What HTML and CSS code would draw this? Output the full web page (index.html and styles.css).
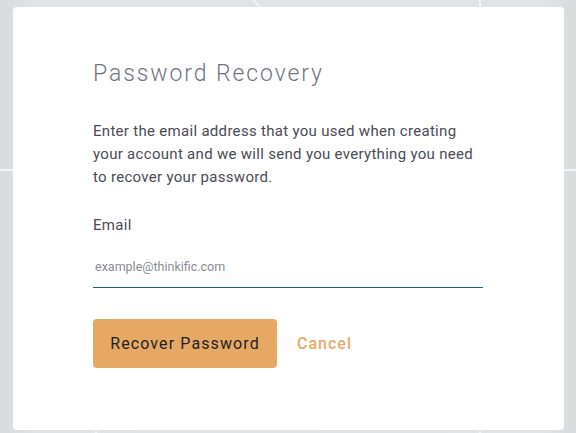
FILE: index.html
```html
<!DOCTYPE html>
<html>
<head>
<meta charset="utf-8">
<link rel="stylesheet" href="styles.css">
</head>
<body>
<svg class="backdrop" width="576" height="433" viewBox="0 0 576 433" aria-hidden="true">
  <g stroke="#f2f3f4" stroke-width="2" fill="none">
    <line x1="0" y1="170" x2="576" y2="170"/>
    <line x1="480" y1="0" x2="480" y2="433"/>
    <line x1="96" y1="300" x2="96" y2="433"/>
    <line x1="251" y1="-2" x2="262" y2="9"/>
  </g>
</svg>
<main class="card">
  <h1 class="title">Password Recovery</h1>
  <p class="intro">Enter the email address that you used when creating your account and we will send you everything you need to recover your password.</p>
  <form class="form">
    <label class="label" for="email">Email</label>
    <input class="input" id="email" type="email" placeholder="example@thinkific.com">
    <div class="actions">
      <button type="button" class="btn-primary">Recover Password</button>
      <a class="cancel" href="#">Cancel</a>
    </div>
  </form>
</main>
</body>
</html>
```
FILE: styles.css
```css
html, body {
  margin: 0;
  padding: 0;
}
body {
  width: 576px;
  height: 433px;
  overflow: hidden;
  position: relative;
  background: linear-gradient(90deg, #d9dadc 0%, #e1e2e4 6%, #e2e3e5 94%, #d9dadc 100%);
  font-family: Roboto, "Liberation Sans", sans-serif;
}
.backdrop {
  position: absolute;
  left: 0;
  top: 0;
}
.card {
  position: relative;
  box-sizing: border-box;
  margin: 7px 12px 0 13px;
  height: 423px;
  background: #fff;
  border-radius: 4px;
  padding: 51px 80px 0 80px;
}
.title {
  margin: 0;
  font-weight: 300;
  font-size: 23px;
  line-height: 32px;
  color: #72757f;
  letter-spacing: 1.9px;
}
.intro {
  margin: 30px 0 0;
  font-size: 15px;
  line-height: 23px;
  letter-spacing: 0.3px;
  color: #4a4b55;
  width: 390px;
}
.form {
  display: flex;
  flex-direction: column;
  margin-top: 25px;
}
.label {
  font-size: 15px;
  line-height: 22px;
  letter-spacing: 0.3px;
  color: #4a4b55;
}
.input {
  margin-top: 22px;
  width: 390px;
  box-sizing: border-box;
  border: none;
  border-bottom: 1px solid #1b5f87;
  padding: 0 0 11px 2px;
  font-family: Roboto, "Liberation Sans", sans-serif;
  font-size: 12.5px;
  line-height: 18px;
  color: #333;
  outline: none;
  background: transparent;
}
.input::placeholder {
  color: #8a8c93;
}
.actions {
  display: flex;
  align-items: center;
  gap: 20px;
  margin-top: 31px;
}
.btn-primary {
  width: 184px;
  height: 49px;
  border: none;
  border-radius: 4px;
  background: #e6a964;
  color: #1f1f24;
  font-family: Roboto, "Liberation Sans", sans-serif;
  font-size: 16px;
  letter-spacing: 1.1px;
  padding: 0;
}
.cancel {
  color: #e8a964;
  text-decoration: none;
  font-size: 16px;
  font-weight: 500;
  letter-spacing: 1px;
}
```
